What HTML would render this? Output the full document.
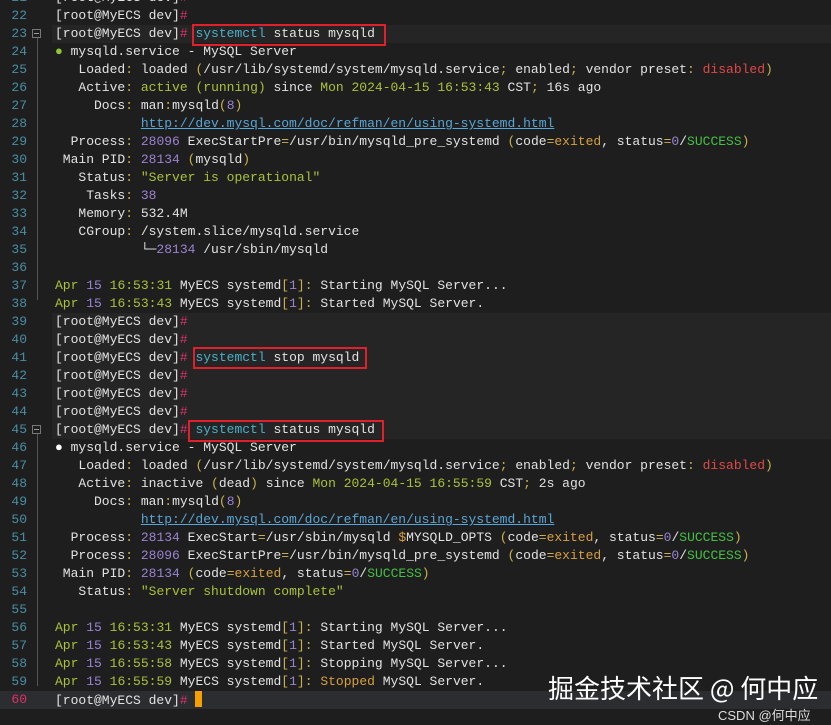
<!DOCTYPE html>
<html><head><meta charset="utf-8"><style>
html,body{margin:0;padding:0;background:#1e1e1e;width:831px;height:725px;overflow:hidden;position:relative}
.wrap{position:absolute;left:0;top:-11px;width:831px}
.row{position:relative;height:18px;line-height:18px;font-family:"Liberation Mono",monospace;font-size:13px;color:#e2e2e2;white-space:pre}
.ln{position:absolute;left:0;width:27px;text-align:right;color:#4a8ea3}
.tx{position:absolute;left:55px}
.lt{background:linear-gradient(to right,#1e1e1e 0,#1e1e1e 52px,#252526 52px)}
.cur{background:#2c2d31}
.cur .ln{color:#e0306a}
.p{color:#c9b24a}.g{color:#a8c23a}.n{color:#9b83d3}.o{color:#d8a040}.r{color:#e04848}.s{color:#45c045}
.u{color:#58a6d6;text-decoration:underline}.c{color:#4ab0c8}.h{color:#e0306a}
.box{position:absolute;border:2px solid #e0202a;height:18px}
.gut{position:absolute;left:37px;width:1px;background:#555}
.fold{position:absolute;left:32px;width:9px;height:9px;border:1px solid #777;box-sizing:border-box}
.fold:after{content:"";position:absolute;left:1px;right:1px;top:3px;height:1px;background:#999}
.bul{display:inline-block;width:15.6px}
</style></head><body>
<div class="wrap">
<div class="row"><span class="ln">21</span><span class="tx">[root@MyECS dev]<span class="h">#</span></span></div>
<div class="row"><span class="ln">22</span><span class="tx">[root@MyECS dev]<span class="h">#</span></span></div>
<div class="row lt"><span class="ln">23</span><span class="tx">[root@MyECS dev]<span class="h">#</span> <span class="c">systemctl</span> status mysqld</span></div>
<div class="row"><span class="ln">24</span><span class="tx"><span class="bul" style="color:#8cc43a">●</span>mysqld.service - MySQL Server</span></div>
<div class="row"><span class="ln">25</span><span class="tx">   Loaded<span class="p">:</span> loaded <span class="p">(</span>/usr/lib/systemd/system/mysqld.service<span class="p">;</span> enabled<span class="p">;</span> vendor preset<span class="p">:</span> <span class="r">disabled</span><span class="p">)</span></span></div>
<div class="row"><span class="ln">26</span><span class="tx">   Active<span class="p">:</span> <span class="g">active</span> <span class="g">(running)</span> since <span class="g">Mon 2024-04-15 16:53:43</span> CST<span class="p">;</span> 16s ago</span></div>
<div class="row"><span class="ln">27</span><span class="tx">     Docs<span class="p">:</span> man<span class="p">:</span>mysqld<span class="p">(</span><span class="n">8</span><span class="p">)</span></span></div>
<div class="row"><span class="ln">28</span><span class="tx">           <span class="u">http://dev.mysql.com/doc/refman/en/using-systemd.html</span></span></div>
<div class="row"><span class="ln">29</span><span class="tx">  Process<span class="p">:</span> <span class="n">28096</span> ExecStartPre<span class="p">=</span>/usr/bin/mysqld_pre_systemd <span class="p">(</span>code<span class="p">=</span><span class="o">exited</span>, status<span class="p">=</span><span class="n">0</span>/<span class="s">SUCCESS</span><span class="p">)</span></span></div>
<div class="row"><span class="ln">30</span><span class="tx"> Main PID<span class="p">:</span> <span class="n">28134</span> <span class="p">(</span>mysqld<span class="p">)</span></span></div>
<div class="row"><span class="ln">31</span><span class="tx">   Status<span class="p">:</span> <span class="g">"Server is operational"</span></span></div>
<div class="row"><span class="ln">32</span><span class="tx">    Tasks<span class="p">:</span> <span class="n">38</span></span></div>
<div class="row"><span class="ln">33</span><span class="tx">   Memory<span class="p">:</span> 532.4M</span></div>
<div class="row"><span class="ln">34</span><span class="tx">   CGroup<span class="p">:</span> /system.slice/mysqld.service</span></div>
<div class="row"><span class="ln">35</span><span class="tx">           └─<span class="n">28134</span> /usr/sbin/mysqld</span></div>
<div class="row"><span class="ln">36</span><span class="tx"></span></div>
<div class="row"><span class="ln">37</span><span class="tx"><span class="g">Apr</span> <span class="n">15</span> <span class="g">16:53:31</span> MyECS systemd<span class="p">[</span><span class="n">1</span><span class="p">]:</span> Starting MySQL Server...</span></div>
<div class="row"><span class="ln">38</span><span class="tx"><span class="g">Apr</span> <span class="n">15</span> <span class="g">16:53:43</span> MyECS systemd<span class="p">[</span><span class="n">1</span><span class="p">]:</span> Started MySQL Server.</span></div>
<div class="row lt"><span class="ln">39</span><span class="tx">[root@MyECS dev]<span class="h">#</span></span></div>
<div class="row lt"><span class="ln">40</span><span class="tx">[root@MyECS dev]<span class="h">#</span></span></div>
<div class="row lt"><span class="ln">41</span><span class="tx">[root@MyECS dev]<span class="h">#</span> <span class="c">systemctl</span> stop mysqld</span></div>
<div class="row lt"><span class="ln">42</span><span class="tx">[root@MyECS dev]<span class="h">#</span></span></div>
<div class="row lt"><span class="ln">43</span><span class="tx">[root@MyECS dev]<span class="h">#</span></span></div>
<div class="row lt"><span class="ln">44</span><span class="tx">[root@MyECS dev]<span class="h">#</span></span></div>
<div class="row lt"><span class="ln">45</span><span class="tx">[root@MyECS dev]<span class="h">#</span> <span class="c">systemctl</span> status mysqld</span></div>
<div class="row"><span class="ln">46</span><span class="tx"><span class="bul" style="color:#fff">●</span>mysqld.service - MySQL Server</span></div>
<div class="row"><span class="ln">47</span><span class="tx">   Loaded<span class="p">:</span> loaded <span class="p">(</span>/usr/lib/systemd/system/mysqld.service<span class="p">;</span> enabled<span class="p">;</span> vendor preset<span class="p">:</span> <span class="r">disabled</span><span class="p">)</span></span></div>
<div class="row"><span class="ln">48</span><span class="tx">   Active<span class="p">:</span> inactive <span class="p">(</span>dead<span class="p">)</span> since <span class="g">Mon 2024-04-15 16:55:59</span> CST<span class="p">;</span> 2s ago</span></div>
<div class="row"><span class="ln">49</span><span class="tx">     Docs<span class="p">:</span> man<span class="p">:</span>mysqld<span class="p">(</span><span class="n">8</span><span class="p">)</span></span></div>
<div class="row"><span class="ln">50</span><span class="tx">           <span class="u">http://dev.mysql.com/doc/refman/en/using-systemd.html</span></span></div>
<div class="row"><span class="ln">51</span><span class="tx">  Process<span class="p">:</span> <span class="n">28134</span> ExecStart<span class="p">=</span>/usr/sbin/mysqld <span class="o">$</span>MYSQLD_OPTS <span class="p">(</span>code<span class="p">=</span><span class="o">exited</span>, status<span class="p">=</span><span class="n">0</span>/<span class="s">SUCCESS</span><span class="p">)</span></span></div>
<div class="row"><span class="ln">52</span><span class="tx">  Process<span class="p">:</span> <span class="n">28096</span> ExecStartPre<span class="p">=</span>/usr/bin/mysqld_pre_systemd <span class="p">(</span>code<span class="p">=</span><span class="o">exited</span>, status<span class="p">=</span><span class="n">0</span>/<span class="s">SUCCESS</span><span class="p">)</span></span></div>
<div class="row"><span class="ln">53</span><span class="tx"> Main PID<span class="p">:</span> <span class="n">28134</span> <span class="p">(</span>code<span class="p">=</span><span class="o">exited</span>, status<span class="p">=</span><span class="n">0</span>/<span class="s">SUCCESS</span><span class="p">)</span></span></div>
<div class="row"><span class="ln">54</span><span class="tx">   Status<span class="p">:</span> <span class="g">"Server shutdown complete"</span></span></div>
<div class="row"><span class="ln">55</span><span class="tx"></span></div>
<div class="row"><span class="ln">56</span><span class="tx"><span class="g">Apr</span> <span class="n">15</span> <span class="g">16:53:31</span> MyECS systemd<span class="p">[</span><span class="n">1</span><span class="p">]:</span> Starting MySQL Server...</span></div>
<div class="row"><span class="ln">57</span><span class="tx"><span class="g">Apr</span> <span class="n">15</span> <span class="g">16:53:43</span> MyECS systemd<span class="p">[</span><span class="n">1</span><span class="p">]:</span> Started MySQL Server.</span></div>
<div class="row"><span class="ln">58</span><span class="tx"><span class="g">Apr</span> <span class="n">15</span> <span class="g">16:55:58</span> MyECS systemd<span class="p">[</span><span class="n">1</span><span class="p">]:</span> Stopping MySQL Server...</span></div>
<div class="row"><span class="ln">59</span><span class="tx"><span class="g">Apr</span> <span class="n">15</span> <span class="g">16:55:59</span> MyECS systemd<span class="p">[</span><span class="n">1</span><span class="p">]:</span> <span class="o">Stopped</span> MySQL Server.</span></div>
<div class="row cur"><span class="ln">60</span><span class="tx">[root@MyECS dev]<span class="h">#</span> <span style="display:inline-block;width:7px;height:16px;background:#f5a000;vertical-align:-3px"></span></span></div>
</div>
<div class="gut" style="top:38px;height:262px"></div>
<div class="gut" style="top:434px;height:252px"></div>
<div class="fold" style="top:29px"></div>
<div class="fold" style="top:425px"></div>
<div class="box" style="left:192px;top:24px;width:190px"></div>
<div class="box" style="left:193px;top:347px;width:170px"></div>
<div class="box" style="left:188px;top:420px;width:192px"></div>
<div style="position:absolute;left:548px;top:672px;font-family:'Noto Sans CJK SC',sans-serif;font-size:26px;color:#fff;white-space:nowrap;line-height:32px">掘金技术社区 @ 何中应</div>
<div style="position:absolute;left:718px;top:708px;font-family:'Liberation Sans','Noto Sans CJK SC',sans-serif;font-size:13px;color:#ddd;white-space:nowrap;line-height:16px">CSDN @何中应</div>
</body></html>
